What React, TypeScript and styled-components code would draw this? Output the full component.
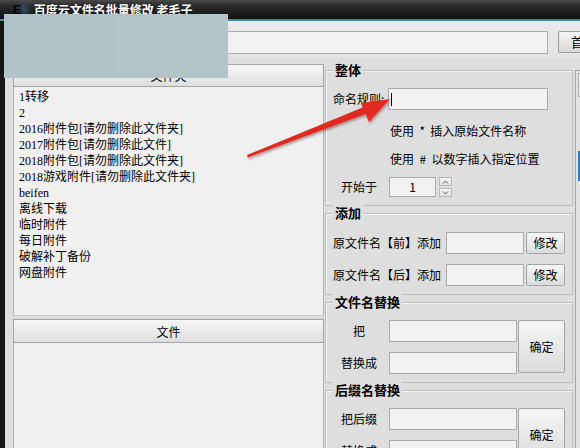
import * as React from 'react'
import styled, { createGlobalStyle } from 'styled-components'

const GlobalStyle = createGlobalStyle`
  html, body {
    margin: 0;
    padding: 0;
    background: #dedede;
  }
  body {
    font-family: "Noto Sans CJK SC", "Noto Sans", sans-serif;
    font-size: 12px;
    color: #000;
  }
`

const Window = styled.div`
  position: relative;
  width: 580px;
  height: 448px;
  overflow: hidden;
  display: flex;
  flex-direction: column;
  background: #dfdfdf;
`

const TitleBar = styled.div`
  height: 19px;
  flex-shrink: 0;
  display: flex;
  align-items: center;
  padding-left: 13px;
  background: linear-gradient(#4a4a4a 0%, #2a2a2a 30%, #111 100%);
  border-bottom: 2px solid #3c8ea6;
  box-shadow: 0 1px 0 #f6f6f6;
`

const AppIcon = styled.span`
  font-family: "Liberation Sans", sans-serif;
  font-weight: 900;
  font-size: 13px;
  line-height: 13px;
  color: #050505;
  text-shadow: 7px 0 6px rgba(70, 160, 235, 0.8);
`

const TitleText = styled.span`
  margin-left: 12px;
  color: #fff;
  font-size: 12px;
  font-weight: bold;
  line-height: 16px;
`

const Client = styled.div`
  flex: 1;
  min-height: 0;
  display: flex;
  flex-direction: column;
  border-left: 5px solid #151515;
  padding-left: 8px;
  background: linear-gradient(#ebebeb 0px, #e4e4e4 34px, #dedede 40px);
`

const PathRow = styled.div`
  display: flex;
  margin-top: 10px;
  height: 23px;
  flex-shrink: 0;
`

const PathInput = styled.div`
  width: 535px;
  height: 23px;
  box-sizing: border-box;
  border: 1px solid #acacac;
  background: #f1f1f1;
  flex-shrink: 0;
`

const TopButton = styled.div`
  margin-left: 10px;
  width: 60px;
  height: 22px;
  flex-shrink: 0;
  box-sizing: border-box;
  border: 1px solid #9d9d9d;
  border-radius: 2px;
  background: linear-gradient(#f6f6f6, #e6e6e6 50%, #d8d8d8);
  padding-left: 12px;
  font-size: 13px;
  line-height: 20px;
`

const Main = styled.div`
  display: flex;
  margin-top: 10px;
  flex: 1;
  min-height: 0;
`

const LeftPanel = styled.div`
  width: 311px;
  flex-shrink: 0;
  display: flex;
  flex-direction: column;
`

const PanelHeader = styled.div<{ $h: number }>`
  height: ${p => p.$h}px;
  flex-shrink: 0;
  box-sizing: border-box;
  border: 1px solid #a5a5a5;
  background: linear-gradient(#f6f6f6, #ececec 45%, #dedede);
  display: flex;
  align-items: center;
  justify-content: center;
  font-size: 12px;
`

const FolderList = styled.div`
  height: 229px;
  flex-shrink: 0;
  box-sizing: border-box;
  border-left: 1px solid #b4b4b4;
  border-right: 1px solid #b4b4b4;
  border-bottom: 1px solid #c9c9c9;
  margin-bottom: 3px;
  padding: 2px 0 0 5px;
  background: #f0f0f0;
`

const FileList = styled.div`
  flex: 1;
  box-sizing: border-box;
  border-left: 1px solid #b4b4b4;
  border-right: 1px solid #b4b4b4;
  background: #f0f0f0;
`

const FolderItem = styled.div`
  font-family: "Liberation Serif", "Noto Sans CJK SC", serif;
  font-size: 12px;
  line-height: 16px;
  height: 16px;
  white-space: nowrap;
`

const RightCol = styled.div`
  width: 248px;
  margin-left: 1px;
  flex-shrink: 0;
  display: flex;
  flex-direction: column;
`

const Group = styled.div<{ $h: number; $mt: number }>`
  height: ${p => p.$h}px;
  margin-top: ${p => p.$mt}px;
  flex-shrink: 0;
  box-sizing: border-box;
  border: 1px solid #c0c0c0;
  box-shadow: inset 1px 1px 0 #f4f4f4;
  line-height: 16px;
`

const GroupTitle = styled.div`
  width: fit-content;
  margin: -9px 0 0 7px;
  padding: 0 2px;
  height: 16px;
  background: #dedede;
  font-size: 13px;
  font-weight: bold;
  line-height: 16px;
`

const Row = styled.div<{ $mt: number }>`
  display: flex;
  align-items: center;
  margin-top: ${p => p.$mt}px;
  padding-left: 7px;
`

const NameLabel = styled.span`
  width: 55px;
  flex-shrink: 0;
  white-space: nowrap;
`

const FieldLabel = styled.span`
  width: 52px;
  flex-shrink: 0;
  text-align: center;
  white-space: nowrap;
`

const PlainLabel = styled.span`
  white-space: nowrap;
`

const TextBox = styled.div<{ $w: number; $h?: number; $ml?: number; $center?: boolean }>`
  width: ${p => p.$w}px;
  height: ${p => p.$h || 22}px;
  margin-left: ${p => p.$ml || 0}px;
  flex-shrink: 0;
  box-sizing: border-box;
  border: 1px solid #acacac;
  background: #f1f1f1;
  display: flex;
  align-items: center;
  justify-content: ${p => (p.$center ? 'center' : 'flex-start')};
  padding-left: ${p => (p.$center ? 0 : 2)}px;
  font-size: 12px;
`

const Caret = styled.span`
  width: 1px;
  height: 13px;
  background: #000;
`

const Hint = styled.div<{ $mt: number }>`
  margin-top: ${p => p.$mt}px;
  padding-left: 64px;
  white-space: pre;
  line-height: 16px;
`

const SpinBox = styled.div`
  margin-left: 3px;
  display: flex;
  flex-direction: column;
  gap: 2px;
`

const SpinBtn = styled.div`
  width: 13px;
  height: 9px;
  box-sizing: border-box;
  border: 1px solid #b8b8b8;
  background: linear-gradient(#f6f6f6, #e2e2e2);
  display: flex;
  align-items: center;
  justify-content: center;
`

const Button = styled.div<{ $w: number; $h: number; $ml: number }>`
  width: ${p => p.$w}px;
  height: ${p => p.$h}px;
  margin-left: ${p => p.$ml}px;
  flex-shrink: 0;
  box-sizing: border-box;
  border: 1px solid #a4a4a4;
  border-radius: 2px;
  background: linear-gradient(#f5f5f5, #e9e9e9 50%, #dcdcdc);
  display: flex;
  align-items: center;
  justify-content: center;
  font-size: 12px;
`

const PairBlock = styled.div`
  display: flex;
  margin-top: 10px;
  padding-left: 7px;
`

const PairFields = styled.div`
  display: flex;
  flex-direction: column;
  gap: 10px;
`

const PairRow = styled.div`
  display: flex;
  align-items: center;
`

const Strip = styled.div`
  margin-left: 2px;
  margin-top: 6px;
  width: 40px;
  flex-shrink: 0;
  border-left: 1px solid #a5a5a5;
  border-top: 1px solid #a5a5a5;
  background: #e2e2e2;
`

const StripHead = styled.div`
  height: 22px;
  margin: 2px 0 0 2px;
  border: 1px solid #b0b0b0;
  background: linear-gradient(#f6f6f6, #e4e4e4);
`

const StripMark = styled.div`
  width: 6px;
  height: 30px;
  margin: 54px 0 0 2px;
  background: #2b7fd2;
`

const Censor = styled.div`
  position: absolute;
  left: 4px;
  top: 14px;
  width: 224px;
  height: 64px;
  display: flex;
`

const CensorPart = styled.div<{ $c: string }>`
  flex: 1;
  background: ${p => p.$c};
`

const Overlay = styled.svg`
  position: absolute;
  left: 0;
  top: 0;
  pointer-events: none;
`

const folders = [
  '1转移',
  '2',
  '2016附件包[请勿删除此文件夹]',
  '2017附件包[请勿删除此文件]',
  '2018附件包[请勿删除此文件夹]',
  '2018游戏附件[请勿删除此文件夹]',
  'beifen',
  '离线下载',
  '临时附件',
  '每日附件',
  '破解补丁备份',
  '网盘附件',
]

const Chevron = ({ up }: { up?: boolean }) => (
  <svg width="7" height="4" viewBox="0 0 7 4">
    <polyline
      points={up ? '1,3.5 3.5,1 6,3.5' : '1,0.5 3.5,3 6,0.5'}
      fill="none"
      stroke="#555"
      strokeWidth="1"
    />
  </svg>
)

const App = () => {
  return (
    <Window>
      <GlobalStyle />
      <TitleBar>
        <AppIcon>E</AppIcon>
        <TitleText>百度云文件名批量修改 老毛子</TitleText>
      </TitleBar>
      <Client>
        <PathRow>
          <PathInput />
          <TopButton>首页</TopButton>
        </PathRow>
        <Main>
          <LeftPanel>
            <PanelHeader $h={23}>文件夹</PanelHeader>
            <FolderList>
              {folders.map(f => (
                <FolderItem key={f}>{f}</FolderItem>
              ))}
            </FolderList>
            <PanelHeader $h={24}>文件</PanelHeader>
            <FileList />
          </LeftPanel>

          <RightCol>
            <Group $h={136} $mt={6}>
              <GroupTitle>整体</GroupTitle>
              <Row $mt={10}>
                <NameLabel>命名规则:</NameLabel>
                <TextBox $w={160}>
                  <Caret />
                </TextBox>
              </Row>
              <Hint $mt={13}>{'使用  *  插入原始文件名称'}</Hint>
              <Hint $mt={12}>{'使用  #  以数字插入指定位置'}</Hint>
              <Row $mt={10}>
                <FieldLabel>开始于</FieldLabel>
                <TextBox $w={47} $h={20} $ml={4} $center>
                  1
                </TextBox>
                <SpinBox>
                  <SpinBtn>
                    <Chevron up />
                  </SpinBtn>
                  <SpinBtn>
                    <Chevron />
                  </SpinBtn>
                </SpinBox>
              </Row>
            </Group>

            <Group $h={82} $mt={7}>
              <GroupTitle>添加</GroupTitle>
              <Row $mt={11}>
                <PlainLabel>原文件名【前】添加</PlainLabel>
                <TextBox $w={78} $ml={5} />
                <Button $w={39} $h={22} $ml={2}>修改</Button>
              </Row>
              <Row $mt={10}>
                <PlainLabel>原文件名【后】添加</PlainLabel>
                <TextBox $w={78} $ml={5} />
                <Button $w={39} $h={22} $ml={2}>修改</Button>
              </Row>
            </Group>

            <Group $h={81} $mt={7}>
              <GroupTitle>文件名替换</GroupTitle>
              <PairBlock>
                <PairFields>
                  <PairRow>
                    <FieldLabel>把</FieldLabel>
                    <TextBox $w={128} $ml={4} />
                  </PairRow>
                  <PairRow>
                    <FieldLabel>替换成</FieldLabel>
                    <TextBox $w={128} $ml={4} />
                  </PairRow>
                </PairFields>
                <Button $w={47} $h={53} $ml={1}>确定</Button>
              </PairBlock>
            </Group>

            <Group $h={100} $mt={7}>
              <GroupTitle>后缀名替换</GroupTitle>
              <PairBlock>
                <PairFields>
                  <PairRow>
                    <FieldLabel>把后缀</FieldLabel>
                    <TextBox $w={128} $ml={4} />
                  </PairRow>
                  <PairRow>
                    <FieldLabel>替换成</FieldLabel>
                    <TextBox $w={128} $ml={4} />
                  </PairRow>
                </PairFields>
                <Button $w={47} $h={53} $ml={1}>确定</Button>
              </PairBlock>
            </Group>
          </RightCol>

          <Strip>
            <StripHead />
            <StripMark />
          </Strip>
        </Main>
      </Client>

      {/* grey box hiding part of the window */}
      <Censor>
        <CensorPart $c="#b1c3c8" />
        <CensorPart $c="#b4c5c9" />
      </Censor>

      {/* red annotation arrow */}
      <Overlay width="580" height="448" viewBox="0 0 580 448">
        <defs>
          <filter id="arrowShadow" x="-10%" y="-30%" width="120%" height="160%">
            <feDropShadow dx="1" dy="2" stdDeviation="1" floodColor="#400" floodOpacity="0.35" />
          </filter>
        </defs>
        <g filter="url(#arrowShadow)">
          <polygon points="247,155 247.8,157.4 367,113.5 365,106.5" fill="#df2a22" />
          <polygon points="390,99 361,103 369,122" fill="#e32c24" />
        </g>
      </Overlay>
    </Window>
  )
}

export default App
